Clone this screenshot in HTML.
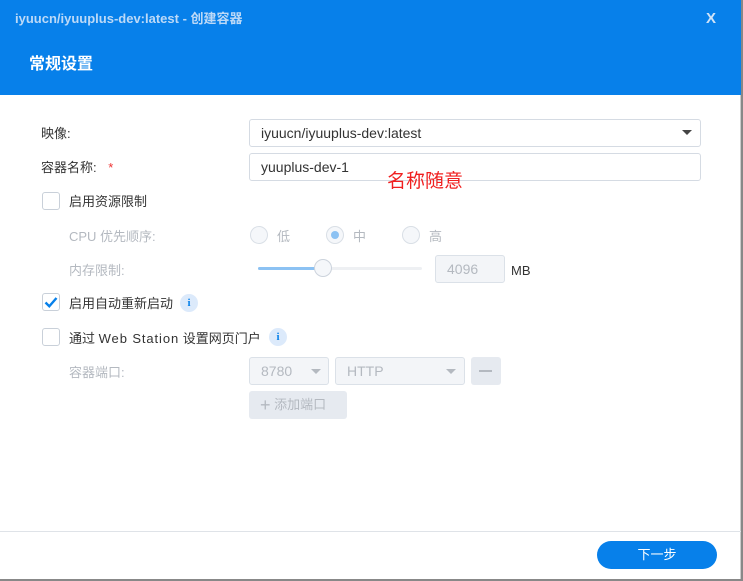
<!DOCTYPE html>
<html><head><meta charset="utf-8"><style>
*{box-sizing:border-box;margin:0;padding:0}
body{width:743px;height:581px;background:#888;position:relative;overflow:hidden;font-family:"Liberation Sans","Noto Sans CJK SC",sans-serif;font-size:13px;color:#333}
.win{position:absolute;left:0;top:0;width:741px;height:579px;background:#fff;border-right:1px solid #ccc}
.hd{position:absolute;left:0;top:0;width:741px;height:95px;background:#0780ea}
.t1{position:absolute;left:15px;top:11px;line-height:16px;color:#bcd9f7;font-size:13px;font-weight:bold}
.x{position:absolute;left:706px;top:11px;line-height:16px;color:#cfe3f8;font-size:15px;font-weight:bold}
.t2{position:absolute;left:29px;top:55px;line-height:20px;color:#fff;font-size:16px;font-weight:bold}
.a{position:absolute}
.lbl{position:absolute;font-size:13px;color:#333;line-height:16px;white-space:nowrap;margin-top:2px}
.dim{color:#b4b9c0}
.inp{position:absolute;border:1px solid #d5dbe3;border-radius:3px;background:#fff;padding-left:11px;font-size:14px;color:#333}
.cb{position:absolute;width:18px;height:18px;border:1px solid #c9d0d9;border-radius:3px;background:#fff}
.rd{position:absolute;width:18px;height:18px;border:1px solid #d9dfe6;border-radius:50%;background:#f5f7fa}
.info{position:absolute;width:18px;height:18px;border-radius:50%;background:#dceafb;color:#0780ea;font-size:11px;font-weight:bold;text-align:center;line-height:18px;font-family:"Liberation Serif",serif}
.dis{position:absolute;border:1px solid #dbe1e8;border-radius:3px;background:#f3f5f8;color:#b4b9c0;font-size:14px;padding-left:11px}
.caret{position:absolute;width:0;height:0;border-left:5px solid transparent;border-right:5px solid transparent;border-top:5px solid #b4b9c0}
</style></head><body>
<div class="win">
<div class="hd"><div class="t1">iyuucn/iyuuplus-dev:latest - 创建容器</div><div class="x">X</div><div class="t2">常规设置</div></div>

<div class="lbl" style="left:41px;top:124px">映像:</div>
<div class="inp" style="left:249px;top:119px;width:452px;height:28px;line-height:26px">iyuucn/iyuuplus-dev:latest</div>
<div class="caret" style="left:682px;top:130px;border-top-color:#444"></div>

<div class="lbl" style="left:41px;top:158px">容器名称: <span style="color:#e33;margin-left:8px">*</span></div>
<div class="inp" style="left:249px;top:153px;width:452px;height:28px;line-height:26px">yuuplus-dev-1</div>
<div class="a" style="left:387px;top:170px;line-height:24px;color:#f02020;font-size:19px">名称随意</div>

<div class="cb" style="left:42px;top:192px"></div>
<div class="lbl" style="left:69px;top:192px">启用资源限制</div>

<div class="lbl dim" style="left:69px;top:227px">CPU 优先顺序:</div>
<div class="rd" style="left:250px;top:226px"></div><div class="lbl dim" style="left:277px;top:227px">低</div>
<div class="rd" style="left:326px;top:226px"><div style="position:absolute;left:4px;top:4px;width:8px;height:8px;border-radius:50%;background:#8cc2f3"></div></div><div class="lbl dim" style="left:353px;top:227px">中</div>
<div class="rd" style="left:402px;top:226px"></div><div class="lbl dim" style="left:429px;top:227px">高</div>

<div class="lbl dim" style="left:69px;top:261px">内存限制:</div>
<div class="a" style="left:258px;top:267px;width:164px;height:3px;background:#eef0f3;border-radius:2px"></div>
<div class="a" style="left:258px;top:267px;width:66px;height:3px;background:#8cc2f3;border-radius:2px"></div>
<div class="a" style="left:314px;top:259px;width:18px;height:18px;border-radius:50%;border:1px solid #ccd3dc;background:#f5f7fa"></div>
<div class="dis" style="left:435px;top:255px;width:70px;height:28px;line-height:26px">4096</div>
<div class="lbl" style="left:511px;top:261px">MB</div>

<div class="cb" style="left:42px;top:293px"><svg width="18" height="18" style="position:absolute;left:-1px;top:-1px"><path d="M3.5 9.5l3.8 3.8 7.2-8.3" stroke="#0780ea" stroke-width="2.4" fill="none"/></svg></div>
<div class="lbl" style="left:69px;top:294px">启用自动重新启动</div>
<div class="info" style="left:180px;top:294px">i</div>

<div class="cb" style="left:42px;top:328px"></div>
<div class="lbl" style="left:69px;top:329px">通过 <span style="letter-spacing:0.9px">Web Station</span> 设置网页门户</div>
<div class="info" style="left:269px;top:328px">i</div>

<div class="lbl dim" style="left:69px;top:363px">容器端口:</div>
<div class="dis" style="left:249px;top:357px;width:80px;height:28px;line-height:26px">8780</div>
<div class="caret" style="left:311px;top:369px"></div>
<div class="dis" style="left:335px;top:357px;width:130px;height:28px;line-height:26px">HTTP</div>
<div class="caret" style="left:446px;top:369px"></div>
<div class="a" style="left:471px;top:357px;width:30px;height:28px;background:#e6eaf0;border-radius:3px"><div style="position:absolute;left:8px;top:13px;width:13px;height:2px;background:#b4b9c0"></div></div>
<div class="a" style="left:249px;top:391px;width:98px;height:28px;background:#e6eaf0;border-radius:3px;color:#b4b9c0;font-size:13px;line-height:28px;padding-left:11px"><span style="font-size:18px;vertical-align:-2px">+</span> 添加端口</div>

<div class="a" style="left:0;top:531px;width:741px;height:1px;background:#dfe3e8"></div>
<div class="a" style="left:597px;top:541px;width:120px;height:28px;border-radius:14px;background:#0780ea;color:#fff;text-align:center;line-height:28px;font-size:13px">下一步</div>
</div>
</body></html>
